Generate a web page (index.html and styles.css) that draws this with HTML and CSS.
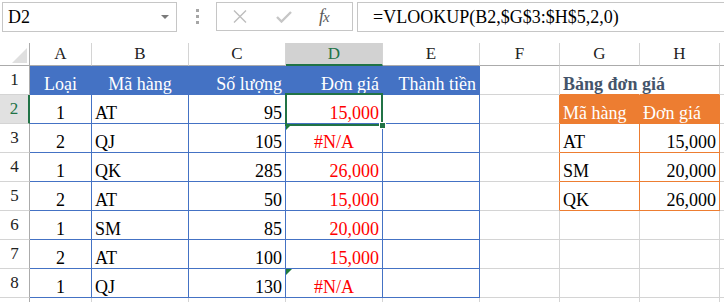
FILE: index.html
```html
<!DOCTYPE html>
<html lang="vi">
<head>
    <meta charset="UTF-8">
    <title>Bảng đơn giá</title>
    <link rel="stylesheet" href="styles.css">
</head>
<body>
    <!-- Formula bar -->
    <div class="formula-bar">
        <div class="name-box">D2<span class="caret"></span></div>
        <div class="grip"><i></i><i></i><i></i></div>
        <div class="fx-buttons">
            <svg class="btn-cancel" width="14" height="13" viewBox="0 0 14 13">
                <path d="M1 0.5 L13 12.5 M13 0.5 L1 12.5" stroke="#bdbdbd" stroke-width="1.4" fill="none"/>
            </svg>
            <svg class="btn-enter" width="16" height="12" viewBox="0 0 16 12">
                <path d="M1 6 L5.5 10.5 L15 1" stroke="#c6c6c6" stroke-width="2.4" fill="none"/>
            </svg>
            <span class="fx"><i>f</i><i class="x">x</i></span>
        </div>
        <div class="formula-input">=VLOOKUP(B2,$G$3:$H$5,2,0)</div>
    </div>

    <!-- Sheet -->
    <div class="sheet">
        <div class="corner"><span class="select-all"></span></div>
        <div class="ch">A</div>
        <div class="ch">B</div>
        <div class="ch">C</div>
        <div class="ch ch-sel">D</div>
        <div class="ch">E</div>
        <div class="ch">F</div>
        <div class="ch">G</div>
        <div class="ch">H</div>
        <div class="ch"></div>

        <!-- row 1 -->
        <div class="rh">1</div>
        <div class="c head m">Loại</div>
        <div class="c head m">Mã hàng</div>
        <div class="c head r">Số lượng</div>
        <div class="c head r">Đơn giá</div>
        <div class="c head r">Thành tiền</div>
        <div class="c"></div>
        <div class="c title or-b no-r">Bảng đơn giá</div>
        <div class="c or-b"></div>
        <div class="c"></div>

        <!-- row 2 -->
        <div class="rh rh-sel">2</div>
        <div class="c bl m">1</div>
        <div class="c bl">AT</div>
        <div class="c bl r">95</div>
        <div class="c bl r red active">15,000<span class="handle"></span></div>
        <div class="c bl"></div>
        <div class="c or-r"></div>
        <div class="c orange-head">Mã hàng</div>
        <div class="c orange-head">Đơn giá</div>
        <div class="c"></div>

        <!-- row 3 -->
        <div class="rh">3</div>
        <div class="c bl m">2</div>
        <div class="c bl">QJ</div>
        <div class="c bl r">105</div>
        <div class="c bl m red err">#N/A</div>
        <div class="c bl"></div>
        <div class="c or-r"></div>
        <div class="c or">AT</div>
        <div class="c or r">15,000</div>
        <div class="c"></div>

        <!-- row 4 -->
        <div class="rh">4</div>
        <div class="c bl m">1</div>
        <div class="c bl">QK</div>
        <div class="c bl r">285</div>
        <div class="c bl r red">26,000</div>
        <div class="c bl"></div>
        <div class="c or-r"></div>
        <div class="c or">SM</div>
        <div class="c or r">20,000</div>
        <div class="c"></div>

        <!-- row 5 -->
        <div class="rh">5</div>
        <div class="c bl m">2</div>
        <div class="c bl">AT</div>
        <div class="c bl r">50</div>
        <div class="c bl r red">15,000</div>
        <div class="c bl"></div>
        <div class="c or-r"></div>
        <div class="c or">QK</div>
        <div class="c or r">26,000</div>
        <div class="c"></div>

        <!-- row 6 -->
        <div class="rh">6</div>
        <div class="c bl m">1</div>
        <div class="c bl">SM</div>
        <div class="c bl r">85</div>
        <div class="c bl r red">20,000</div>
        <div class="c bl"></div>
        <div class="c"></div>
        <div class="c"></div>
        <div class="c"></div>
        <div class="c"></div>

        <!-- row 7 -->
        <div class="rh">7</div>
        <div class="c bl m">2</div>
        <div class="c bl">AT</div>
        <div class="c bl r">100</div>
        <div class="c bl r red">15,000</div>
        <div class="c bl"></div>
        <div class="c"></div>
        <div class="c"></div>
        <div class="c"></div>
        <div class="c"></div>

        <!-- row 8 -->
        <div class="rh">8</div>
        <div class="c bl m">1</div>
        <div class="c bl">QJ</div>
        <div class="c bl r">130</div>
        <div class="c bl m red err">#N/A</div>
        <div class="c bl"></div>
        <div class="c"></div>
        <div class="c"></div>
        <div class="c"></div>
        <div class="c"></div>

        <!-- row 9 (only its top edge shows) -->
        <div class="rh"></div>
        <div class="c"></div>
        <div class="c"></div>
        <div class="c"></div>
        <div class="c"></div>
        <div class="c"></div>
        <div class="c"></div>
        <div class="c"></div>
        <div class="c"></div>
        <div class="c"></div>
    </div>
</body>
</html>
```

FILE: styles.css
```css
* {
    margin: 0;
    padding: 0;
    box-sizing: border-box;
}

body {
    background: #fff;
    color: #000;
    font-family: 'Liberation Serif', 'Times New Roman', serif;
    width: 724px;
    height: 302px;
    overflow: hidden;
}

/* Formula bar */
.formula-bar {
    height: 43px;
    display: flex;
    align-items: flex-start;
}

.name-box {
    margin: 2px 0 0 2px;
    width: 175px;
    height: 30px;
    border: 1px solid #c6c6c6;
    padding-left: 5px;
    display: flex;
    align-items: center;
    font-size: 18px;
    line-height: 27px;
}

.caret {
    margin-left: auto;
    margin-right: 7px;
    border-left: 4px solid transparent;
    border-right: 4px solid transparent;
    border-top: 4px solid #7a7a7a;
}

.grip {
    margin: 9px 0 0 19px;
    display: flex;
    flex-direction: column;
    gap: 3px;
}

.grip i {
    width: 3px;
    height: 3px;
    background: #a6a6a6;
}

.fx-buttons {
    margin: 2px 0 0 17px;
    width: 137px;
    height: 29px;
    border: 1px solid #c6c6c6;
    padding-left: 16px;
    display: flex;
    align-items: center;
}

.btn-cancel {
    margin-right: 29px;
}

.btn-enter {
    margin-right: 27px;
}

.fx {
    color: #5a5a5a;
    font-size: 18px;
    line-height: 20px;
    letter-spacing: -1px;
}

.fx .x {
    font-size: 15px;
}

.formula-input {
    flex: 1;
    margin: 2px -1px 0 4px;
    height: 30px;
    border: 1px solid #c6c6c6;
    padding: 1px 0 0 15px;
    font-size: 18px;
    line-height: 27px;
    white-space: nowrap;
}

/* Sheet grid */
.sheet {
    display: grid;
    grid-template-columns: 30px 62px 97px 97px 97px 97px 80px 80px 80px 1fr;
    grid-template-rows: 23px repeat(9, 29px);
}

.corner {
    border-right: 1px solid #ababab;
    border-bottom: 1px solid #ababab;
    position: relative;
}

.select-all {
    position: absolute;
    right: 2px;
    bottom: 2px;
    border-left: 15px solid transparent;
    border-bottom: 15px solid #dfdfdf;
}

.ch {
    border-right: 1px solid #d4d4d4;
    border-bottom: 1px solid #ababab;
    display: flex;
    align-items: center;
    justify-content: center;
    font-size: 17px;
    color: #222;
}

.ch-sel {
    background: #d2d2d2;
    border-bottom: 2px solid #217346;
    color: #217346;
}

.rh {
    border-right: 1px solid #ababab;
    border-bottom: 1px solid #d4d4d4;
    display: flex;
    align-items: center;
    justify-content: center;
    font-size: 17px;
    color: #222;
}

.rh-sel {
    background: #e1e1e1;
    border-right: 2px solid #217346;
    color: #217346;
}

.c {
    border-right: 1px solid #d4d4d4;
    border-bottom: 1px solid #d4d4d4;
    padding: 0 3px;
    display: flex;
    align-items: flex-end;
    font-size: 18px;
    line-height: 20px;
    white-space: nowrap;
    min-width: 0;
}

.r { justify-content: flex-end; }
.m { justify-content: center; }

.head {
    background: #4472c4;
    border-color: #4472c4;
    color: #fff;
}

.bl { border-color: #4472c4; }

.red { color: #ff0000; }

.title {
    font-weight: bold;
    color: #44546a;
}

.no-r { border-right-color: transparent; }

.or { border-color: #ed7d31; }
.or-b { border-bottom-color: #ed7d31; }
.or-r { border-right-color: #ed7d31; }

.orange-head {
    background: #ed7d31;
    border-color: #ed7d31;
    color: #fff;
}

/* Active cell D2 */
.active {
    position: relative;
}

.active::after {
    content: '';
    position: absolute;
    left: -1px;
    top: -2px;
    right: -1px;
    bottom: -3px;
    border: 2px solid #217346;
}

.handle {
    position: absolute;
    right: -4px;
    bottom: -6px;
    width: 7px;
    height: 7px;
    background: #217346;
    border: 1px solid #fff;
    z-index: 1;
}

/* Error indicator */
.err {
    position: relative;
}

.err::before {
    content: '';
    position: absolute;
    left: 0;
    top: 0;
    border-top: 6px solid #1e7b3c;
    border-right: 6px solid transparent;
}
```
